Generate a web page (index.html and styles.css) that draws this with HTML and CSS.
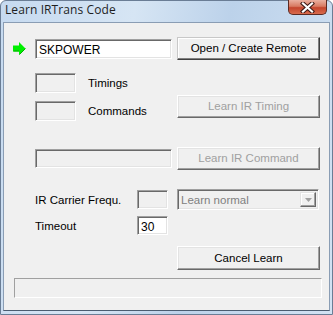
FILE: index.html
```html
<!DOCTYPE html>
<html>
<head>
<meta charset="utf-8">
<link rel="stylesheet" href="styles.css">
</head>
<body>
<div class="window">
  <div class="titlebar">
    <span class="title">Learn IRTrans Code</span>
    <div class="close">
      <svg width="15" height="11" viewBox="0 0 15 11">
        <path d="M3 1.5 L12 9.5 M12 1.5 L3 9.5" stroke="#3c1a16" stroke-width="4.2" stroke-linecap="square"/>
        <path d="M3 1.5 L12 9.5 M12 1.5 L3 9.5" stroke="#ffffff" stroke-width="2.2" stroke-linecap="square"/>
      </svg>
    </div>
  </div>
  <div class="client">
    <div class="row row1">
      <svg class="arrow" width="13" height="13" viewBox="0 0 13 13">
        <path d="M0 3.5 H6 V0 L12.5 6.5 L6 13 V9.5 H0 Z" fill="#00f000"/>
        <path d="M6.5 12.5 L12.5 6.5 M0.5 9 H6" stroke="#00b000" stroke-width="1" fill="none"/>
      </svg>
      <div class="edit white wide">SKPOWER</div>
      <div class="btn default">Open / Create Remote</div>
    </div>
    <div class="row row2">
      <div class="leftcol">
        <div class="pair"><div class="edit small"></div><span class="lbl">Timings</span></div>
        <div class="pair"><div class="edit small"></div><span class="lbl">Commands</span></div>
      </div>
      <div class="btn disabled timing">Learn IR Timing</div>
    </div>
    <div class="row row4">
      <div class="edit wide"></div>
      <div class="btn disabled">Learn IR Command</div>
    </div>
    <div class="row row5">
      <span class="flabel">IR Carrier Frequ.</span>
      <div class="edit tiny"></div>
      <div class="combo">
        <span class="ctext">Learn normal</span>
        <div class="cbtn">
          <svg width="7" height="4" viewBox="0 0 7 4"><path d="M0 0 H7 L3.5 4 Z" fill="#a0a0a0"/></svg>
        </div>
      </div>
    </div>
    <div class="row row6">
      <span class="flabel">Timeout</span>
      <div class="edit tiny white">30</div>
    </div>
    <div class="row row7">
      <div class="btn">Cancel Learn</div>
    </div>
    <div class="status"></div>
  </div>
</div>
</body>
</html>
```
FILE: styles.css
```css
html, body {
  margin: 0;
  padding: 0;
}
body {
  width: 333px;
  height: 315px;
  overflow: hidden;
  font-family: "Liberation Sans", Arial, sans-serif;
  font-size: 11px;
  color: #000;
}
.window {
  width: 333px;
  height: 315px;
  box-sizing: border-box;
  border: 1px solid #6a7d95;
  border-radius: 6px 6px 0 0;
  background: linear-gradient(100deg, #c6daf0 0%, #d6e5f4 35%, #bcd2ea 60%, #d2e2f3 100%);
  display: flex;
  flex-direction: column;
}
.titlebar {
  height: 21px;
  display: flex;
  align-items: flex-start;
  justify-content: space-between;
  padding-left: 4px;
  padding-right: 5px;
}
.title {
  font-family: "Open Sans", "Noto Sans", sans-serif;
  font-size: 12px;
  line-height: 13px;
  margin-top: 2px;
  color: #1e1e1e;
  letter-spacing: 0.1px;
}
.close {
  width: 39px;
  height: 15px;
  margin-top: -1px;
  box-sizing: border-box;
  border: 1px solid #5c2a22;
  border-top: none;
  border-radius: 0 0 5px 5px;
  background: linear-gradient(#eab0a0 0%, #d87a62 45%, #c4452d 55%, #d86b4d 100%);
  display: flex;
  align-items: center;
  justify-content: center;
}
.client {
  flex: 1;
  margin: 0 2px 3px 2px;
  background: #f0f0f0;
  border: 1px solid #8a9db4;
  border-bottom-color: #4a5c70;
  box-sizing: border-box;
  padding: 14px 0 0 31px;
  display: flex;
  flex-direction: column;
}
.row {
  display: flex;
  align-items: center;
}
.row1 {
  margin-left: -22px;
  height: 23px;
}
.arrow {
  margin-right: 9px;
}
.edit {
  box-sizing: border-box;
  height: 20px;
  border-style: solid;
  border-width: 1px;
  border-color: #a0a0a0 #ffffff #ffffff #a0a0a0;
  box-shadow: inset 1px 1px 0 #696969, inset -1px -1px 0 #e3e3e3;
  background: #f0f0f0;
  padding: 3px 3px 0 3px;
  line-height: 14px;
  font-size: 12px;
}
.edit.white { background: #fff; }
.wide { width: 137px; }
.small { width: 41px; }
.tiny { width: 31px; height: 19px; }
.btn {
  box-sizing: border-box;
  width: 143px;
  height: 23px;
  margin-left: 5px;
  border: 1px solid;
  border-color: #ffffff #696969 #696969 #ffffff;
  box-shadow: inset -1px -1px 0 #a0a0a0, inset 1px 1px 0 #e3e3e3;
  background: #f0f0f0;
  display: flex;
  align-items: center;
  justify-content: center;
  font-size: 11.5px;
  padding-bottom: 1px;
}
.btn.default {
  border-color: #c8c8c8 #404040 #404040 #c8c8c8;
  box-shadow: inset -1px -1px 0 #808080, inset 1px 1px 0 #ffffff;
}
.btn.disabled { color: #a0a0a0; }
.row2 {
  margin-top: 13px;
  align-items: flex-start;
}
.leftcol {
  width: 137px;
  display: flex;
  flex-direction: column;
  gap: 8px;
}
.pair {
  display: flex;
  align-items: center;
}
.lbl {
  margin-left: 12px;
  font-size: 11.5px;
}
.timing { margin-top: 22px; }
.row4 {
  margin-top: 26px;
  height: 23px;
}
.row4 .edit { height: 19px; }
.row5 {
  margin-top: 19px;
  height: 21px;
}
.flabel {
  width: 102px;
  font-size: 11.5px;
}
.combo {
  box-sizing: border-box;
  width: 142px;
  height: 21px;
  margin-left: 9px;
  border: 1px solid;
  border-color: #a0a0a0 #ffffff #ffffff #a0a0a0;
  box-shadow: inset 1px 1px 0 #696969, inset -1px -1px 0 #e3e3e3;
  background: #f0f0f0;
  display: flex;
  align-items: center;
  justify-content: space-between;
  padding: 2px;
}
.ctext {
  color: #808080;
  font-size: 11.5px;
  padding-left: 1px;
}
.cbtn {
  box-sizing: border-box;
  width: 16px;
  height: 15px;
  border: 1px solid;
  border-color: #e3e3e3 #696969 #696969 #e3e3e3;
  box-shadow: inset -1px -1px 0 #a0a0a0, inset 1px 1px 0 #ffffff;
  display: flex;
  align-items: center;
  justify-content: center;
}
.row6 {
  margin-top: 6px;
  height: 19px;
}
.row7 {
  margin-top: 11px;
  padding-left: 137px;
}
.row7 .btn { height: 24px; }
.status {
  margin-top: 8px;
  margin-left: -21px;
  box-sizing: border-box;
  width: 308px;
  height: 20px;
  border: 1px solid;
  border-color: #a0a0a0 #ffffff #ffffff #a0a0a0;
  background: #f0f0f0;
}
```
